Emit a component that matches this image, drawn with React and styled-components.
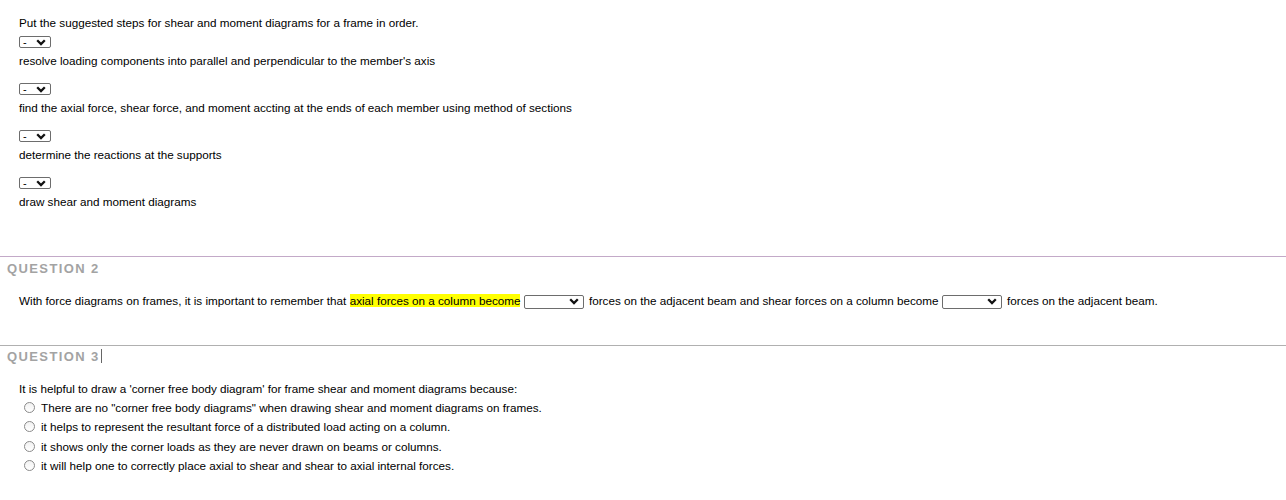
import React from 'react'
import styled, { createGlobalStyle } from 'styled-components'

const GlobalStyle = createGlobalStyle`
  body {
    margin: 0;
    background: #fff;
    font-family: "Liberation Sans", Arial, sans-serif;
    font-size: 11.7px;
    color: #000;
  }
`

const Page = styled.div`
  width: 1286px;
`

const Block = styled.div`
  padding: ${(p) => p.pad};
`

const Line = styled.div`
  line-height: 15px;
  white-space: nowrap;
`

const Steps = styled.div`
  display: flex;
  flex-direction: column;
  gap: 15px;
  margin-top: 6px;
`

const Step = styled.div`
  display: flex;
  flex-direction: column;
  align-items: flex-start;
  gap: 5px;
`

const Select = styled.span`
  display: inline-flex;
  align-items: center;
  justify-content: space-between;
  box-sizing: border-box;
  width: ${(p) => p.w}px;
  height: ${(p) => p.h}px;
  margin-right: ${(p) => (p.inline ? 2 : 0)}px;
  border: 1px solid #6d6d6d;
  border-radius: 2px;
  background: #fff;
  padding: 0 4px 0 3px;
  font-size: 11px;
  line-height: 1;
  vertical-align: middle;
  color: #000;
`

const Divider = styled.hr`
  margin: 0;
  border: none;
  border-top: 1px dotted ${(p) => p.color};
  height: 0;
`

const QuestionLabel = styled.div`
  padding-left: 7px;
  font-size: 13px;
  line-height: 16px;
  font-weight: bold;
  letter-spacing: 1.4px;
  color: #a3a3a3;
`

const Caret = styled.span`
  display: inline-block;
  width: 1px;
  height: 14px;
  margin-left: 1px;
  background: #666;
  vertical-align: -2px;
`

const Inline = styled.div`
  padding-left: 19px;
  line-height: 16px;
  white-space: nowrap;
`

const Mark = styled.span`
  background: #ffff00;
`

const Options = styled.div`
  display: flex;
  flex-direction: column;
  gap: 4.3px;
  margin-top: 4px;
  padding-left: 24px;
`

const Option = styled.label`
  display: flex;
  align-items: center;
  gap: 6px;
  line-height: 15px;
`

const Radio = styled.span`
  box-sizing: border-box;
  width: 11px;
  height: 11px;
  border-radius: 50%;
  border: 1px solid #8a8a8a;
  background: linear-gradient(#f2f2f2, #fff);
`

const Chevron = () => (
  <svg width="10" height="7" viewBox="0 0 10 7">
    <path d="M1.2 1.2 L5 5 L8.8 1.2" fill="none" stroke="#111" strokeWidth="2.3" />
  </svg>
)

const Dropdown = ({ w = 32, h = 12, value = '', inline }) => (
  <Select w={w} h={h} inline={inline ? 1 : 0}>
    <span>{value}</span>
    <Chevron />
  </Select>
)

const steps = [
  "resolve loading components into parallel and perpendicular to the member's axis",
  'find the axial force, shear force, and moment accting at the ends of each member using method of sections',
  'determine the reactions at the supports',
  'draw shear and moment diagrams',
]

const options = [
  'There are no "corner free body diagrams" when drawing shear and moment diagrams on frames.',
  'it helps to represent the resultant force of a distributed load acting on a column.',
  'it shows only the corner loads as they are never drawn on beams or columns.',
  'it will help one to correctly place axial to shear and shear to axial internal forces.',
]

const App = () => (
  <Page>
    <GlobalStyle />
    <Block pad="15px 0 47px 19px">
      <Line>Put the suggested steps for shear and moment diagrams for a frame in order.</Line>
      <Steps>
        {steps.map((s) => (
          <Step key={s}>
            <Dropdown value="-" />
            <Line>{s}</Line>
          </Step>
        ))}
      </Steps>
    </Block>
    <Divider color="#c3a9c8" />
    <Block pad="4px 0 36px 0">
      <QuestionLabel>QUESTION 2</QuestionLabel>
      <Inline style={{ marginTop: 16 }}>
        With force diagrams on frames, it is important to remember that{' '}
        <Mark>axial forces on a column become</Mark> <Dropdown w={60} h={14} inline /> forces on
        the adjacent beam and shear forces on a column become <Dropdown w={60} h={14} inline />{' '}
        forces on the adjacent beam.
      </Inline>
    </Block>
    <Divider color="#b0b0b0" />
    <Block pad="3px 0 20px 0">
      <QuestionLabel>
        QUESTION 3<Caret />
      </QuestionLabel>
      <Line style={{ paddingLeft: 19, marginTop: 16 }}>
        It is helpful to draw a 'corner free body diagram' for frame shear and moment diagrams because:
      </Line>
      <Options>
        {options.map((o) => (
          <Option key={o}>
            <Radio />
            <span>{o}</span>
          </Option>
        ))}
      </Options>
    </Block>
  </Page>
)

export default App
